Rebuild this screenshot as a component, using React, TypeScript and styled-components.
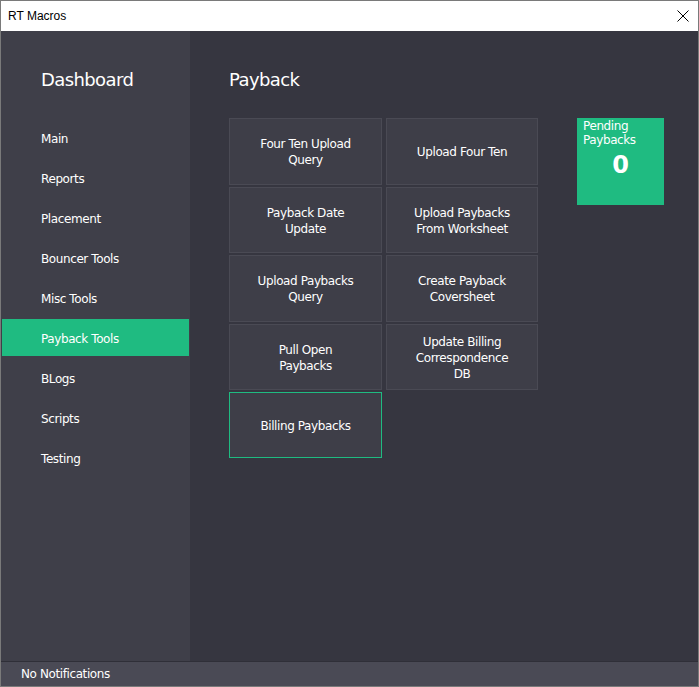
import React from "react";
import styled, { createGlobalStyle } from "styled-components";

const Global = createGlobalStyle`
  html, body {
    margin: 0;
    padding: 0;
    background: #ffffff;
  }
  * {
    box-sizing: border-box;
  }
`;

const Window = styled.div`
  width: 699px;
  height: 687px;
  border: 1px solid #7a7a7a;
  display: flex;
  flex-direction: column;
  font-family: "DejaVu Sans", Verdana, sans-serif;
  color: #ffffff;
  overflow: hidden;
`;

const TitleBar = styled.div`
  height: 30px;
  background: #ffffff;
  color: #000000;
  display: flex;
  align-items: center;
  justify-content: space-between;
  padding: 0 9px 0 7px;
  font-family: "Liberation Sans", Arial, sans-serif;
  font-size: 12px;
  flex-shrink: 0;
`;

const Body = styled.div`
  flex: 1;
  display: flex;
  min-height: 0;
`;

const Sidebar = styled.nav`
  width: 189px;
  background: #3f3f49;
  display: flex;
  flex-direction: column;
  padding-top: 38px;
`;

const Heading = styled.h1`
  margin: 0;
  font-weight: normal;
  font-size: 18px;
  line-height: 22px;
  letter-spacing: -0.6px;
`;

const SideHeading = styled(Heading)`
  padding-left: 40px;
  margin-bottom: 28px;
`;

const NavItem = styled.div<{ $active?: boolean }>`
  height: 37px;
  margin: 0 1px 3px 1px;
  display: flex;
  align-items: center;
  padding: 2px 0 0 39px;
  font-size: 12px;
  letter-spacing: -0.4px;
  background: ${(p) => (p.$active ? "#1fbb81" : "transparent")};
`;

const Main = styled.main`
  flex: 1;
  background: #363640;
  padding: 38px 0 0 39px;
`;

const MainHeading = styled(Heading)`
  margin-bottom: 27px;
`;

const Row = styled.div`
  display: flex;
  align-items: flex-start;
  gap: 39px;
`;

const Grid = styled.div`
  display: grid;
  grid-template-columns: 153px 152px;
  grid-template-rows: 67px 66px 67px 66px 66px;
  column-gap: 4px;
  row-gap: 2px;
`;

const ToolButton = styled.div<{ $focused?: boolean }>`
  background: #3e3e48;
  border: 1px solid ${(p) => (p.$focused ? "#1fbb81" : "#4a4a54")};
  display: flex;
  align-items: center;
  justify-content: center;
  text-align: center;
  font-size: 12px;
  line-height: 16px;
  letter-spacing: -0.4px;
  padding: 1px 12px 0;
`;

const Tile = styled.div`
  width: 87px;
  height: 87px;
  background: #1fbb81;
  padding: 1px 6px;
  display: flex;
  flex-direction: column;
`;

const TileLabel = styled.div`
  font-size: 12px;
  line-height: 14px;
  letter-spacing: -0.4px;
`;

const TileValue = styled.div`
  font-size: 24px;
  font-weight: bold;
  text-align: center;
  margin-top: 4px;
`;

const StatusBar = styled.div`
  height: 25px;
  background: #4a4a55;
  display: flex;
  align-items: center;
  padding-left: 20px;
  font-size: 12px;
  letter-spacing: -0.4px;
  flex-shrink: 0;
  border-top: 1px solid #2f2f38;
`;

const navItems = [
  "Main",
  "Reports",
  "Placement",
  "Bouncer Tools",
  "Misc Tools",
  "Payback Tools",
  "BLogs",
  "Scripts",
  "Testing",
];

const tools = [
  "Four Ten Upload Query",
  "Upload Four Ten",
  "Payback Date Update",
  "Upload Paybacks From Worksheet",
  "Upload Paybacks Query",
  "Create Payback Coversheet",
  "Pull Open Paybacks",
  "Update Billing Correspondence DB",
  "Billing Paybacks",
];

const labelLines: Record<string, string[]> = {
  "Four Ten Upload Query": ["Four Ten Upload", "Query"],
  "Payback Date Update": ["Payback Date", "Update"],
  "Upload Paybacks From Worksheet": ["Upload Paybacks", "From Worksheet"],
  "Upload Paybacks Query": ["Upload Paybacks", "Query"],
  "Create Payback Coversheet": ["Create Payback", "Coversheet"],
  "Pull Open Paybacks": ["Pull Open", "Paybacks"],
  "Update Billing Correspondence DB": ["Update Billing", "Correspondence", "DB"],
};

const CloseIcon = () => (
  <svg width="12" height="12" viewBox="0 0 12 12">
    <path d="M0.5 0.5 L11.5 11.5 M11.5 0.5 L0.5 11.5" stroke="#000" strokeWidth="1" />
  </svg>
);

export default function App() {
  return (
    <>
      <Global />
      <Window>
        <TitleBar>
          <span>RT Macros</span>
          <CloseIcon />
        </TitleBar>
        <Body>
          <Sidebar>
            <SideHeading>Dashboard</SideHeading>
            {navItems.map((n) => (
              <NavItem key={n} $active={n === "Payback Tools"}>
                {n}
              </NavItem>
            ))}
          </Sidebar>
          <Main>
            <MainHeading>Payback</MainHeading>
            <Row>
              <Grid>
                {tools.map((t) => (
                  <ToolButton key={t} $focused={t === "Billing Paybacks"}>
                    <span>
                      {(labelLines[t] || [t]).map((l, i) => (
                        <React.Fragment key={i}>
                          {i > 0 && <br />}
                          {l}
                        </React.Fragment>
                      ))}
                    </span>
                  </ToolButton>
                ))}
              </Grid>
              <Tile>
                <TileLabel>
                  Pending
                  <br />
                  Paybacks
                </TileLabel>
                <TileValue>0</TileValue>
              </Tile>
            </Row>
          </Main>
        </Body>
        <StatusBar>No Notifications</StatusBar>
      </Window>
    </>
  );
}
